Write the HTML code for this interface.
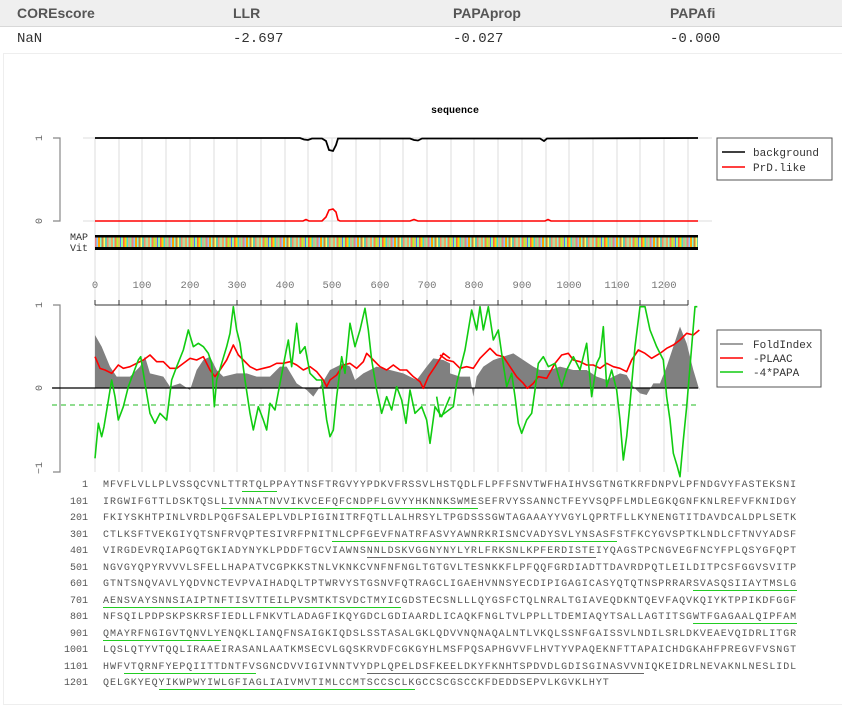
<!DOCTYPE html>
<html><head><meta charset="utf-8"><style>
body{margin:0;width:842px;height:694px;overflow:hidden;background:#fff;font-family:"Liberation Sans",sans-serif;position:relative}
.hdr{position:absolute;left:0;top:0;width:842px;height:26px;background:#efefef;border-bottom:1px solid #d8d8d8}
.hdr span{position:absolute;top:5px;font-weight:bold;font-size:14px;color:#555}
.row span{position:absolute;top:31px;font-family:"Liberation Mono",monospace;font-size:14px;color:#333}
.box{position:absolute;left:3px;top:53px;width:845px;height:650px;border:1px solid #eee}
.seq{position:absolute;left:0;font-family:"Liberation Mono",monospace;font-size:10px;color:#555;white-space:pre;line-height:12px}
.seq .n{position:absolute;right:-88px;width:60px;text-align:right;left:28px}
.seq .t{position:absolute;left:103px;letter-spacing:0.94px}
.g{border-bottom:1.5px solid #22cc22}
.k{border-bottom:1.5px solid #666}
</style></head><body>
<div class="hdr"><span style="left:17px">COREscore</span><span style="left:233px">LLR</span><span style="left:453px">PAPAprop</span><span style="left:670px">PAPAfi</span></div>
<div class="row"><span style="left:17px">NaN</span><span style="left:233px">-2.697</span><span style="left:453px">-0.027</span><span style="left:670px">-0.000</span></div>
<div class="box"></div>
<svg style="position:absolute;left:0;top:0" width="842" height="694" font-family="Liberation Mono,monospace">
<text x="455" y="113" font-size="10" font-weight="bold" text-anchor="middle" fill="#000">sequence</text>
<g stroke="#ddd" stroke-width="1">
<line x1="95" y1="138" x2="95" y2="472"/><line x1="119" y1="138" x2="119" y2="472"/><line x1="142" y1="138" x2="142" y2="472"/><line x1="166" y1="138" x2="166" y2="472"/><line x1="190" y1="138" x2="190" y2="472"/><line x1="214" y1="138" x2="214" y2="472"/><line x1="237" y1="138" x2="237" y2="472"/><line x1="261" y1="138" x2="261" y2="472"/><line x1="285" y1="138" x2="285" y2="472"/><line x1="308" y1="138" x2="308" y2="472"/><line x1="332" y1="138" x2="332" y2="472"/><line x1="356" y1="138" x2="356" y2="472"/><line x1="380" y1="138" x2="380" y2="472"/><line x1="403" y1="138" x2="403" y2="472"/><line x1="427" y1="138" x2="427" y2="472"/><line x1="451" y1="138" x2="451" y2="472"/><line x1="474" y1="138" x2="474" y2="472"/><line x1="498" y1="138" x2="498" y2="472"/><line x1="522" y1="138" x2="522" y2="472"/><line x1="546" y1="138" x2="546" y2="472"/><line x1="569" y1="138" x2="569" y2="472"/><line x1="593" y1="138" x2="593" y2="472"/><line x1="617" y1="138" x2="617" y2="472"/><line x1="640" y1="138" x2="640" y2="472"/><line x1="664" y1="138" x2="664" y2="472"/><line x1="688" y1="138" x2="688" y2="472"/>
<line x1="83" y1="138" x2="712" y2="138"/><line x1="83" y1="221" x2="712" y2="221"/>
</g>
<!-- upper y axis -->
<g stroke="#888" stroke-width="1.2" fill="none"><path d="M53 138H60V221H53"/><path d="M53 305H60V472H53"/><path d="M53 388H60"/></g>
<g font-size="10" fill="#666"><text transform="translate(42,138) rotate(-90)" text-anchor="middle">1</text><text transform="translate(42,221) rotate(-90)" text-anchor="middle">0</text>
<text transform="translate(42,305) rotate(-90)" text-anchor="middle">1</text><text transform="translate(42,388) rotate(-90)" text-anchor="middle">0</text><text transform="translate(42,468) rotate(-90)" text-anchor="middle">−1</text></g>
<path d="M95 138H300L304 139.5L308 140L312 138.5L322 138.5L326 141L329 150L333 151L336 145L338 138.5L410 138.5L414 140L418 140.5L422 138.5L540 138.5L544 141L547 138.5L698 138" stroke="#000" stroke-width="1.8" fill="none"/>
<path d="M95 221H303L306 219.5L309 221L322 221L326 217L329 210L333 209L336 212L338 220L340 221L410 221L414 219.5L418 221L545 221L548 219.5L551 221L698 221" stroke="#f00" stroke-width="1.6" fill="none"/>
<rect x="717" y="138" width="115" height="42" fill="#fff" stroke="#555"/>
<line x1="722" y1="152" x2="745" y2="152" stroke="#000" stroke-width="1.5"/><line x1="722" y1="167" x2="745" y2="167" stroke="#f00" stroke-width="1.5"/>
<text x="753" y="156" font-size="11" fill="#333">background</text><text x="753" y="171" font-size="11" fill="#333">PrD.like</text>
<text x="88" y="240" font-size="10" fill="#333" text-anchor="end">MAP</text><text x="88" y="251" font-size="10" fill="#333" text-anchor="end">Vit</text>
<rect x="95" y="235" width="603" height="15" fill="#000"/>
<rect x="95" y="237.5" width="603" height="9.5" fill="url(#st)"/>
<defs><pattern id="st" width="37" height="10" patternUnits="userSpaceOnUse">
<rect x="0" width="2" height="10" fill="#f4a460"/><rect x="2" width="1.5" height="10" fill="#7fffd4"/><rect x="3.5" width="2" height="10" fill="#ff7f50"/><rect x="5.5" width="1.5" height="10" fill="#adff2f"/><rect x="7" width="2" height="10" fill="#e0c060"/><rect x="9" width="1" height="10" fill="#4080ff"/><rect x="10" width="2" height="10" fill="#98fb98"/><rect x="12" width="1.5" height="10" fill="#ff6347"/><rect x="13.5" width="2" height="10" fill="#ffd700"/><rect x="15.5" width="1.5" height="10" fill="#40e0d0"/><rect x="17" width="2" height="10" fill="#d2b48c"/><rect x="19" width="1.5" height="10" fill="#90ee90"/><rect x="20.5" width="2" height="10" fill="#f08080"/><rect x="22.5" width="1.5" height="10" fill="#87cefa"/><rect x="24" width="2" height="10" fill="#ffa500"/><rect x="26" width="1.5" height="10" fill="#7fffd4"/><rect x="27.5" width="2" height="10" fill="#cd853f"/><rect x="29.5" width="1.5" height="10" fill="#ffff66"/><rect x="31" width="2" height="10" fill="#66cdaa"/><rect x="33" width="1.5" height="10" fill="#ff8c69"/><rect x="34.5" width="2.5" height="10" fill="#b0e0a0"/>
</pattern></defs>
<g font-size="10.5" fill="#777" text-anchor="middle"><text x="95" y="288">0</text><text x="142" y="288">100</text><text x="190" y="288">200</text><text x="237" y="288">300</text><text x="285" y="288">400</text><text x="332" y="288">500</text><text x="380" y="288">600</text><text x="427" y="288">700</text><text x="474" y="288">800</text><text x="522" y="288">900</text><text x="569" y="288">1000</text><text x="617" y="288">1100</text><text x="664" y="288">1200</text></g>
<g stroke="#333" stroke-width="1"><line x1="95" y1="305" x2="688" y2="305"/><path d="M95 300V305M119 300V305M142 300V305M166 300V305M190 300V305M214 300V305M237 300V305M261 300V305M285 300V305M308 300V305M332 300V305M356 300V305M380 300V305M403 300V305M427 300V305M451 300V305M474 300V305M498 300V305M522 300V305M546 300V305M569 300V305M593 300V305M617 300V305M640 300V305M664 300V305M688 300V305"/></g>
<!-- gray fold index -->
<g transform="translate(30,280) scale(0.33333)"><polygon fill="#808080" points="195,325 195,165 215,200 240,260 260,290 300,290 330,260 345,230 360,280 400,290 420,320 450,310 480,330 500,270 520,240 540,230 560,270 580,290 620,280 650,280 680,290 720,290 750,260 770,260 800,310 830,330 850,350 870,320 900,270 940,250 960,260 975,300 1000,280 1040,260 1080,270 1120,280 1160,300 1190,260 1210,235 1240,240 1260,250 1260,325"/></g>
<g transform="translate(440,280) scale(0.33333)"><polygon fill="#808080" points="0,325 0,260 30,280 60,290 90,290 100,350 110,290 130,260 160,240 190,230 220,220 250,240 280,260 300,270 330,270 360,260 400,270 440,270 470,290 500,300 520,290 540,280 560,285 580,320 600,340 620,345 640,310 660,310 680,260 700,200 720,140 740,190 760,270 778,330 778,325"/></g>
<line x1="52" y1="388" x2="698" y2="388" stroke="#000" stroke-width="1.2"/>
<line x1="52" y1="405" x2="698" y2="405" stroke="#22bb22" stroke-width="1" stroke-dasharray="5,4"/>
<g transform="translate(30,280) scale(0.33333)" fill="none" stroke-linejoin="round">
<polyline vector-effect="non-scaling-stroke" stroke="#f00" stroke-width="1.6" points="195,230 210,265 225,270 245,280 265,255 280,265 300,260 320,250 340,240 360,225 380,245 400,245 420,265 440,265 460,250 480,235 500,240 520,230 540,270 555,290 570,270 590,240 610,195 625,225 640,240 660,260 680,270 700,265 720,260 740,250 760,250 780,245 800,255 820,270 840,260 860,275 880,300 890,320 900,300 920,285 940,255 960,250 980,265 1000,245 1010,220 1030,240 1050,260 1070,270 1090,255 1110,270 1130,270 1150,290 1170,305 1180,325 1195,290 1215,260 1240,220 1260,235"/>
<polyline vector-effect="non-scaling-stroke" stroke="#11cc11" stroke-width="1.6" points="195,535 205,430 215,470 222,440 232,380 245,300 255,350 265,420 280,380 295,320 310,280 325,240 332,230 345,310 360,400 375,430 390,400 410,420 425,300 440,260 460,210 475,150 490,200 505,190 520,200 535,220 545,250 553,380 560,300 575,250 590,200 600,160 610,80 620,150 630,190 645,300 660,400 670,450 685,380 700,420 710,450 720,370 735,390 750,310 765,230 775,180 785,260 800,130 810,220 825,200 840,280 860,300 875,300 890,420 900,470 910,450 920,350 935,230 945,280 960,130 975,200 990,150 1005,85 1015,150 1025,240 1040,330 1055,400 1070,350 1085,390 1100,320 1115,360 1128,430 1140,330 1155,400 1175,380 1190,420 1200,490 1215,380 1235,410 1260,350"/>
</g>
<g transform="translate(440,280) scale(0.33333)" fill="none" stroke-linejoin="round">
<polyline vector-effect="non-scaling-stroke" stroke="#f00" stroke-width="1.6" points="0,225 20,240 40,245 60,265 80,260 100,265 120,235 150,205 170,225 190,230 210,260 230,290 250,310 262,325 280,310 295,290 320,295 345,250 365,225 385,220 400,240 420,245 440,255 460,255 480,265 500,250 520,260 540,265 560,275 575,240 595,210 615,220 635,235 660,220 680,205 700,195 720,180 740,160 760,165 778,150"/>
<polyline vector-effect="non-scaling-stroke" stroke="#11cc11" stroke-width="1.6" points="-10,350 0,410 40,380 50,310 75,210 95,90 110,150 120,80 130,150 145,80 160,180 175,150 185,220 200,320 215,280 225,350 235,430 245,460 260,420 275,400 285,330 295,250 310,230 325,260 345,250 365,320 380,270 400,230 420,270 440,190 455,350 470,250 480,230 490,140 500,320 515,270 530,330 540,420 550,540 560,470 570,370 585,200 600,80 615,80 630,150 650,200 670,240 680,350 690,420 700,520 712,560 720,590 730,480 740,380 750,260 765,80 772,80"/>
</g>
<rect x="717" y="330" width="104" height="57" fill="#fff" stroke="#555"/>
<line x1="720" y1="344" x2="743" y2="344" stroke="#808080" stroke-width="1.5"/><line x1="720" y1="358" x2="743" y2="358" stroke="#f00" stroke-width="1.5"/><line x1="720" y1="372" x2="743" y2="372" stroke="#11cc11" stroke-width="1.5"/>
<g font-size="11" fill="#333"><text x="753" y="348">FoldIndex</text><text x="753" y="362">-PLAAC</text><text x="753" y="376">-4*PAPA</text></g>
</svg>
<div class="seq" style="top:480px;width:842px">
<div style="position:absolute;top:0"><span class="n">1</span><span class="t">MFVFLVLLPLVSSQCVNLTT<span class="g">RTQLP</span>PAYTNSFTRGVYYPDKVFRSSVLHSTQDLFLPFFSNVTWFHAIHVSGTNGTKRFDNPVLPFNDGVYFASTEKSNI</span></div>
<div style="position:absolute;top:16.5px"><span class="n">101</span><span class="t">IRGWIFGTTLDSKTQSL<span class="g">LIVNNATNVVIKVCEFQFCNDPFLGVYYHKNNKSWME</span>SEFRVYSSANNCTFEYVSQPFLMDLEGKQGNFKNLREFVFKNIDGY</span></div>
<div style="position:absolute;top:33px"><span class="n">201</span><span class="t">FKIYSKHTPINLVRDLPQGFSALEPLVDLPIGINITRFQTLLALHRSYLTPGDSSSGWTAGAAAYYVGYLQPRTFLLKYNENGTITDAVDCALDPLSETK</span></div>
<div style="position:absolute;top:49.5px"><span class="n">301</span><span class="t">CTLKSFTVEKGIYQTSNFRVQPTESIVRFPNIT<span class="g">NLCPFGEVFNATRFASVYAWNRKRISNCVADYSVLYNSASF</span>STFKCYGVSPTKLNDLCFTNVYADSF</span></div>
<div style="position:absolute;top:66px"><span class="n">401</span><span class="t">VIRGDEVRQIAPGQTGKIADYNYKLPDDFTGCVIAWNS<span class="k">NNLDSKVGGNYNYLYRLFRKSNLKPFERDISTE</span>IYQAGSTPCNGVEGFNCYFPLQSYGFQPT</span></div>
<div style="position:absolute;top:82.5px"><span class="n">501</span><span class="t">NGVGYQPYRVVVLSFELLHAPATVCGPKKSTNLVKNKCVNFNFNGLTGTGVLTESNKKFLPFQQFGRDIADTTDAVRDPQTLEILDITPCSFGGVSVITP</span></div>
<div style="position:absolute;top:99px"><span class="n">601</span><span class="t">GTNTSNQVAVLYQDVNCTEVPVAIHADQLTPTWRVYSTGSNVFQTRAGCLIGAEHVNNSYECDIPIGAGICASYQTQTNSPRRAR<span class="g">SVASQSIIAYTMSLG</span></span></div>
<div style="position:absolute;top:115.5px"><span class="n">701</span><span class="t"><span class="g">AENSVAYSNNSIAIPTNFTISVTTEILPVSMTKTSVDCTMYIC</span>GDSTECSNLLLQYGSFCTQLNRALTGIAVEQDKNTQEVFAQVKQIYKTPPIKDFGGF</span></div>
<div style="position:absolute;top:132px"><span class="n">801</span><span class="t">NFSQILPDPSKPSKRSFIEDLLFNKVTLADAGFIKQYGDCLGDIAARDLICAQKFNGLTVLPPLLTDEMIAQYTSALLAGTITSG<span class="g">WTFGAGAALQIPFAM</span></span></div>
<div style="position:absolute;top:148.5px"><span class="n">901</span><span class="t"><span class="g">QMAYRFNGIGVTQNVLY</span>ENQKLIANQFNSAIGKIQDSLSSTASALGKLQDVVNQNAQALNTLVKQLSSNFGAISSVLNDILSRLDKVEAEVQIDRLITGR</span></div>
<div style="position:absolute;top:165px"><span class="n">1001</span><span class="t">LQSLQTYVTQQLIRAAEIRASANLAATKMSECVLGQSKRVDFCGKGYHLMSFPQSAPHGVVFLHVTYVPAQEKNFTTAPAICHDGKAHFPREGVFVSNGT</span></div>
<div style="position:absolute;top:181.5px"><span class="n">1101</span><span class="t">HWF<span class="g">VTQRNFYEPQIITTDNTFV</span>SGNCDVVIGIVNNTVY<span class="k">DPLQPELDSFKEELDKYFKNHTSPDVDLGDISGINASVVN</span>IQKEIDRLNEVAKNLNESLIDL</span></div>
<div style="position:absolute;top:198px"><span class="n">1201</span><span class="t">QELGKYEQ<span class="g">YIKWPWYIWLGFIAGLIAIVMVTIMLCCMTSCCSCLK</span>GCCSCGSCCKFDEDDSEPVLKGVKLHYT</span></div>
</div>
</body></html>
